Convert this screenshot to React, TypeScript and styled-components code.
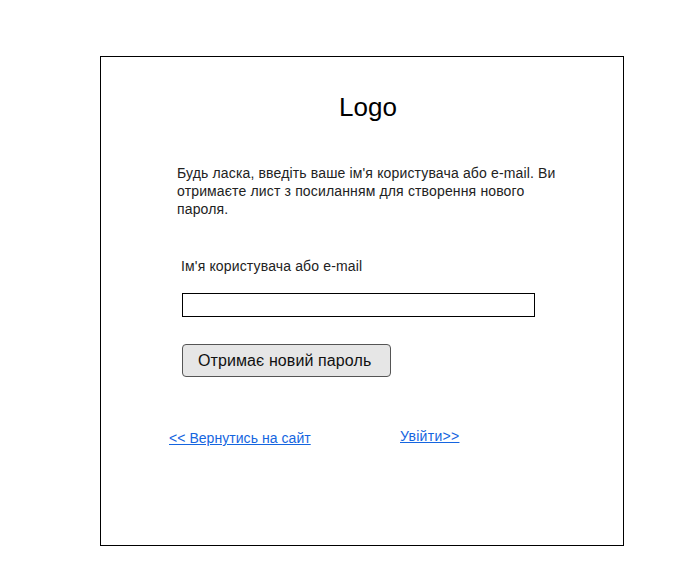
import React from "react";
import styled, { createGlobalStyle } from "styled-components";

const Global = createGlobalStyle`
  html, body { margin: 0; padding: 0; background: #fff; }
  body { font-family: "Liberation Sans", Arial, sans-serif; color: #222; }
`;

const Page = styled.div`
  padding: 56px 0 0 100px;
`;

const Card = styled.div`
  box-sizing: border-box;
  width: 524px;
  height: 490px;
  border: 1px solid #000;
  display: flex;
  flex-direction: column;
`;

const Logo = styled.h1`
  margin: 35px 0 0 0;
  padding-left: 12px;
  font-size: 26px;
  font-weight: 400;
  line-height: 30px;
  text-align: center;
  color: #000;
`;

const Intro = styled.p`
  margin: 42px 0 0 76px;
  width: 385px;
  font-size: 14px;
  line-height: 18px;
  letter-spacing: 0.15px;
`;

const Form = styled.form`
  display: flex;
  flex-direction: column;
  align-items: flex-start;
  margin: 40px 0 0 80px;
`;

const Label = styled.label`
  font-size: 14px;
  line-height: 16px;
  letter-spacing: 0.15px;
  color: #222;
`;

const Input = styled.input`
  box-sizing: border-box;
  margin: 19px 0 0 1px;
  width: 353px;
  height: 24px;
  border: 1px solid #000;
  border-radius: 0;
  padding: 0 4px;
  outline: none;
`;

const Button = styled.button`
  box-sizing: border-box;
  margin: 27px 0 0 1px;
  width: 209px;
  height: 33px;
  background: #e6e6e6;
  border: 1px solid #555;
  border-radius: 4px;
  font-family: "Liberation Sans", Arial, sans-serif;
  font-size: 16px;
  letter-spacing: 0.1px;
  color: #111;
  text-align: left;
  padding: 0 0 0 15px;
`;

const Links = styled.div`
  display: flex;
  align-items: flex-start;
  margin: 51px 0 0 68px;
`;

const NavLink = styled.a<{ $drop?: number; $width?: number; $spacing?: number }>`
  font-size: 14px;
  line-height: 16px;
  letter-spacing: ${(p) => p.$spacing ?? 0.1}px;
  color: #1565e0;
  text-decoration: underline;
  margin-top: ${(p) => p.$drop ?? 0}px;
  ${(p) => (p.$width ? `width: ${p.$width}px;` : "")}
`;

export default function App() {
  return (
    <>
      <Global />
      <Page>
        <Card>
          <Logo>Logo</Logo>
          <Intro>
            Будь ласка, введіть ваше ім'я користувача або e-mail. Ви отримаєте
            лист з посиланням для створення нового пароля.
          </Intro>
          <Form onSubmit={(e) => e.preventDefault()}>
            <Label htmlFor="user">Ім'я користувача або e-mail</Label>
            <Input id="user" type="text" />
            <Button type="submit">Отримає новий пароль</Button>
          </Form>
          <Links>
            <NavLink href="#" $drop={2} $width={231} $spacing={0.05}>
              &lt;&lt; Вернутись на сайт
            </NavLink>
            <NavLink href="#" $spacing={0.3}>
              Увійти&gt;&gt;
            </NavLink>
          </Links>
        </Card>
      </Page>
    </>
  );
}
